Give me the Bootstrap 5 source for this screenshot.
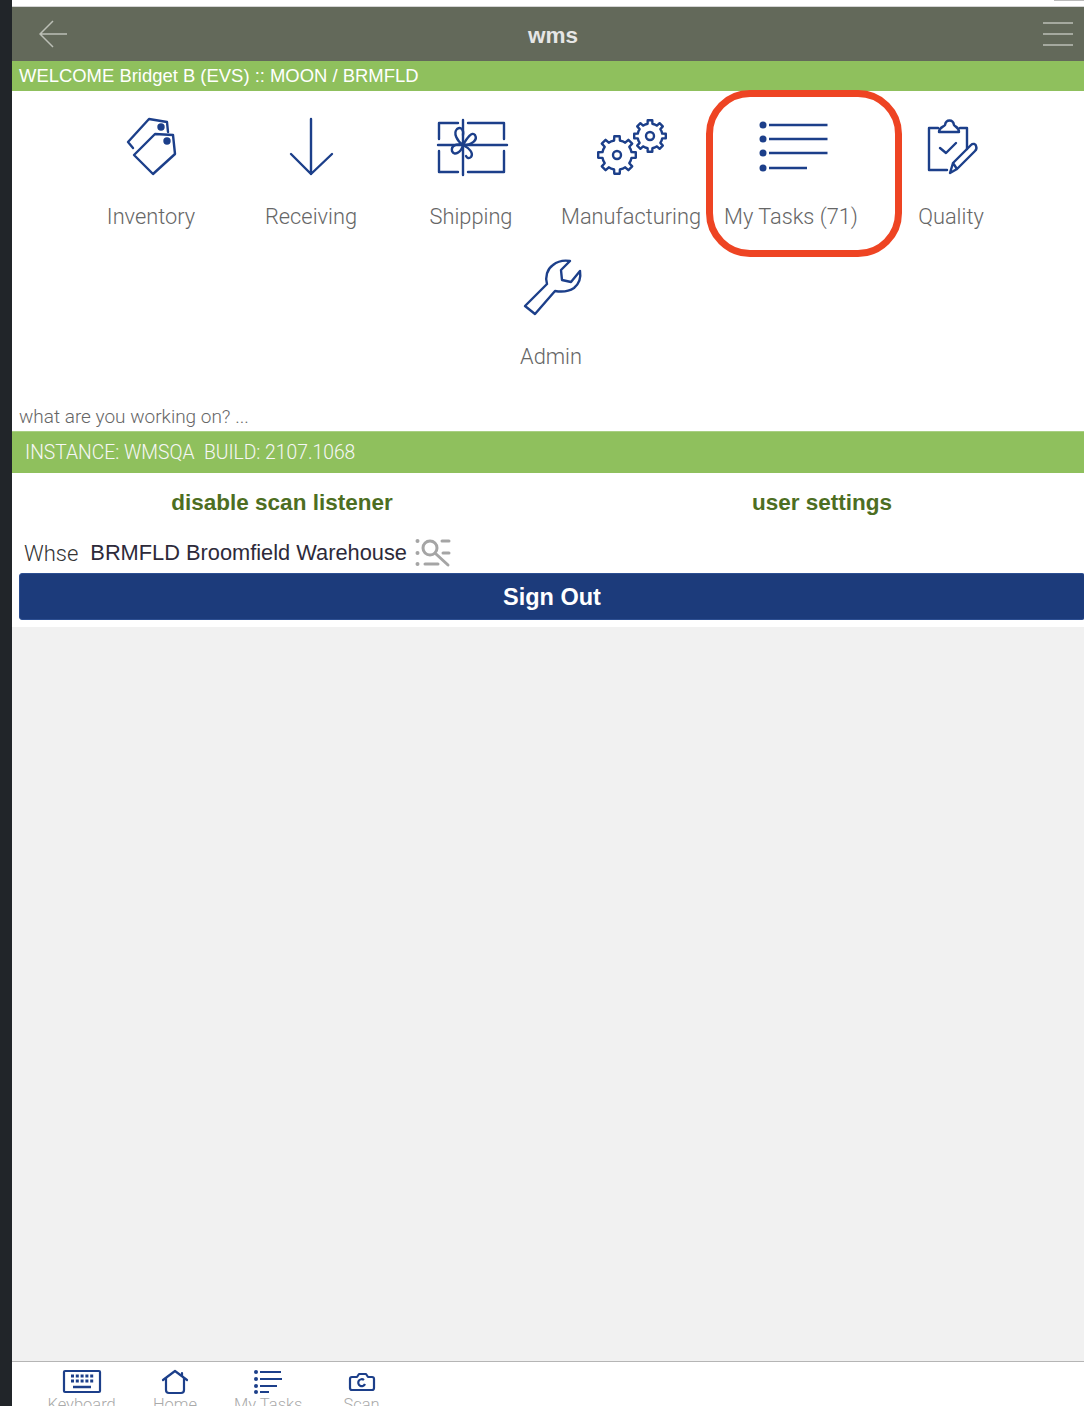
<!DOCTYPE html>
<html lang="en">
<head>
  <meta charset="UTF-8" />
  <meta name="viewport" content="width=device-width, initial-scale=1" />
  <title>wms</title>
  <link href="https://cdn.jsdelivr.net/npm/bootstrap@5.3.3/dist/css/bootstrap.min.css" rel="stylesheet" />
  <style>
    html, body { height: 1406px; overflow: hidden; }
    body { font-family: "Liberation Sans", Arial, sans-serif; background: #fff; }
    .side-strip { width: 12px; background: #212529; flex: none; }
    .app-page { width: 1080px; height: 1406px; flex: none; }
    .top-gap { height: 7px; border-bottom: 1px solid #d5d5d5; flex: none; }
    .top-sliver { position: absolute; left: 1054px; top: 0; width: 30px; height: 1px; background: #bbb; }
    .app-head { height: 54px; background: #63695a; padding: 0 19px 0 27px; flex: none; }
    .app-head b { font-size: 22.500px; color: #e6e6e6; margin-top: 3px; margin-left: -4px; }
    .welcome-bar { height: 30px; background: #8fc05d; color: #fff; font-size: 18.450px; line-height: 29px; padding-left: 7px; flex: none; }
    .tile-wrap { padding: 25px 2px 0 0; flex: none; }
    .app-tile { width: 160px; height: 140px; position: relative; text-align: center; }
    .app-tile svg { display: block; margin: 1px auto 0; overflow: visible; }
    .tile-name { margin-top: 25px; font-family: Roboto, "Liberation Sans", sans-serif; font-weight: 300; font-size: 21.800px; line-height: 30px; color: #666; white-space: nowrap; }
    .red-ring { position: absolute; left: -5px; top: -26px; width: 196px; height: 167px; border: 7px solid #ee4423; border-radius: 44px; }
    .work-on { font-family: Roboto, "Liberation Sans", sans-serif; font-weight: 300; font-size: 19px; line-height: 24px; color: #666; padding: 9px 0 2px 7px; flex: none; }
    .build-bar { height: 42px; background: #8fc05d; border-top: 1px solid #a9cf82; color: #f7f7f7; font-family: Roboto, "Liberation Sans", sans-serif; font-weight: 300; font-size: 19.300px; line-height: 41px; padding-left: 13px; white-space: pre; flex: none; }
    .link-row { height: 60px; flex: none; }
    .link-row a { color: #4d6e22; font-weight: 700; font-size: 22.500px; text-decoration: none; line-height: 60px; }
    .whse-row { height: 40px; padding: 0 0 0 12px; font-size: 21.800px; color: #2d2a3a; flex: none; }
    .whse-row span:first-child { font-family: Roboto, "Liberation Sans", sans-serif; font-weight: 300; font-size: 22px; color: #333; margin-right: 12px; }
    .whse-row svg { margin-left: 8px; }
    .sign-btn { display: block; width: 1066px; height: 47px; margin-left: 7px; padding: 3px 0 0; background: #1c3b7b; border: 1px solid #2d4f92; border-radius: 3px; color: #fff; font-size: 23.500px; font-weight: 700; flex: none; }
    .sign-btn:hover { background: #1c3b7b; color: #fff; }
    .gray-fill { margin-top: 7px; background: #f1f1f1; }
    .tab-bar { height: 45px; border-top: 1px solid #b5b5b5; background: #fff; padding-left: 23px; overflow: hidden; flex: none; }
    .tab-item { width: 93.300px; text-align: center; flex: none; }
    .tab-item svg { display: block; margin: 8px auto 0; overflow: visible; }
    .tab-item div { font-family: Roboto, "Liberation Sans", sans-serif; font-weight: 300; font-size: 16.500px; line-height: 16px; color: #aaa; white-space: nowrap; margin-top: 3px; }
  </style>
</head>
<body class="d-flex position-relative">
  <div class="side-strip"></div>
  <div class="top-sliver"></div>
  <div class="app-page d-flex flex-column">
    <div class="top-gap"></div>

    <div class="app-head d-flex align-items-center justify-content-between">
      <svg width="28" height="28" viewBox="0 0 28 28" fill="none" stroke="#bcbfb6" stroke-width="1.500"><path d="M14 1 1 14l13 13M1 14h27" /></svg>
      <b>wms</b>
      <svg width="30" height="26" viewBox="0 0 30 26" fill="none" stroke="#bcbfb6" stroke-width="1.500"><path d="M0 2h30M0 13h30M0 24h30" /></svg>
    </div>
    <div class="welcome-bar">WELCOME Bridget B (EVS) :: MOON / BRMFLD</div>

    <div class="tile-wrap d-flex flex-wrap justify-content-center">
      <div class="app-tile">
        <svg width="70" height="60" viewBox="0 0 70 60" fill="none" stroke="#1c3f8a" stroke-width="2.400" stroke-linejoin="round" stroke-linecap="round">
          <path d="M17 31 12 25 33 2l18 3 1 10" />
          <path d="M18 38 37 57 59 37 57 18 39 17Z" />
          <circle cx="45" cy="10" r="2.500" fill="#1c3f8a" /><circle cx="51" cy="24" r="2.500" fill="#1c3f8a" />
        </svg>
        <div class="tile-name">Inventory</div>
      </div>
      <div class="app-tile">
        <svg width="70" height="60" viewBox="0 0 70 60" fill="none" stroke="#1c3f8a" stroke-width="2.400" stroke-linejoin="round" stroke-linecap="round">
          <path d="M35 2V57M15 37 35 57 56 37" />
        </svg>
        <div class="tile-name">Receiving</div>
      </div>
      <div class="app-tile">
        <svg width="70" height="60" viewBox="0 0 70 60" fill="none" stroke="#1c3f8a" stroke-width="2.400" stroke-linejoin="round" stroke-linecap="round">
          <path d="M22 6H3V22M3 34V55H22M32 6H68V22M68 34V55H32M27 3V58M2 28H71" />
          <path d="M27 28C21 24 17 16 21 12 25 9 28 13 27 18M27 28C31 21 36 14 39 18 42 23 36 28 27 28M27 28C20 26 15 29 16 34 18 39 25 36 27 28M27 28C33 31 38 36 35 40 33 42 31 41 30 39" />
        </svg>
        <div class="tile-name">Shipping</div>
      </div>
      <div class="app-tile">
        <svg width="70" height="60" viewBox="0 0 70 60" fill="none" stroke="#1c3f8a" stroke-width="2.400" stroke-linejoin="round">
          <path data-gear="21,38,19" />
          <circle cx="21" cy="38" r="4" />
          <path data-gear="54,19,16" />
          <circle cx="54" cy="19" r="4" />
        </svg>
        <div class="tile-name">Manufacturing</div>
      </div>
      <div class="app-tile">
        <svg width="70" height="60" viewBox="0 0 70 60" fill="#1c3f8a" stroke="#1c3f8a" stroke-width="2.400">
          <circle cx="7" cy="8" r="3.500" stroke="none" /><circle cx="7" cy="22" r="3.500" stroke="none" />
          <circle cx="7" cy="36" r="3.500" stroke="none" /><circle cx="7" cy="51" r="3.500" stroke="none" />
          <path d="M13 8H71.500M13 22H71.500M13 36H71.500M13 51H51" />
        </svg>
        <div class="tile-name">My Tasks (71)</div>
        <div class="red-ring"></div>
      </div>
      <div class="app-tile">
        <svg width="70" height="60" viewBox="0 0 70 60" fill="none" stroke="#1c3f8a" stroke-width="2.400" stroke-linejoin="round" stroke-linecap="round">
          <path d="M22 11H13V53H31M44 11H51V32" />
          <path d="M23 15C23 10 28 10 29 8 30 2 37 2 38 8 39 10 43 10 43 15Z" />
          <path d="M24 31 30 36 40 26" />
          <path d="M34 56 37 46 55 28C57 26 60 27 60 29 61 31 60 33 59 34L41 52ZM37 46 41 52" />
        </svg>
        <div class="tile-name">Quality</div>
      </div>
      <div class="app-tile">
        <svg width="70" height="60" viewBox="0 0 70 60" fill="none" stroke="#1c3f8a" stroke-width="2.400" stroke-linejoin="round" stroke-linecap="round">
          <path d="M9 49 31 27C29 20 31 12 37 8 42 4 48 3 54 4L45 13 46 23 55 25 64 14C65 20 64 26 58 31 52 35 45 35 39 34L19 57Z" />
        </svg>
        <div class="tile-name">Admin</div>
      </div>
    </div>

    <div class="work-on">what are you working on? ...</div>
    <div class="build-bar">INSTANCE: WMSQA  BUILD: 2107.1068</div>

    <div class="row g-0 link-row text-center">
      <div class="col-6"><a href="#">disable scan listener</a></div>
      <div class="col-6"><a href="#">user settings</a></div>
    </div>

    <div class="whse-row d-flex align-items-center">
      <span>Whse</span>
      <span>BRMFLD Broomfield Warehouse</span>
      <svg width="36" height="30" viewBox="0 0 36 30" fill="none" stroke="#a5a5a5" stroke-width="3" stroke-linecap="round">
        <circle cx="2.500" cy="3" r="2" fill="#a5a5a5" stroke="none" /><circle cx="2.500" cy="15" r="2" fill="#a5a5a5" stroke="none" /><circle cx="2.500" cy="26" r="2" fill="#a5a5a5" stroke="none" />
        <circle cx="15" cy="10" r="7" />
        <path d="M21 16 33 27M27 3H34M28 15H34M10 26H23" />
      </svg>
    </div>
    <button type="button" class="btn sign-btn">Sign Out</button>

    <div class="gray-fill flex-grow-1"></div>

    <div class="tab-bar d-flex">
      <div class="tab-item">
        <svg width="38" height="24" viewBox="0 0 38 24" fill="none" stroke="#1c3f8a" stroke-width="2.200">
          <rect x="1" y="1" width="36" height="21" rx="1" />
          <path d="M8 6h23M8 11h23" stroke-dasharray="3 1.800" stroke-width="3" />
          <path d="M10 17h18" stroke-width="2.500" />
        </svg>
        <div>Keyboard</div>
      </div>
      <div class="tab-item">
        <svg width="26" height="24" viewBox="0 0 26 24" fill="none" stroke="#1c3f8a" stroke-width="2.200" stroke-linejoin="round" stroke-linecap="round">
          <path d="M1 10 13 1l12 9" />
          <path d="M4 8V20Q4 23 7 23H19Q22 23 22 20V8M20 6V3" />
        </svg>
        <div>Home</div>
      </div>
      <div class="tab-item">
        <svg width="28" height="24" viewBox="0 0 28 24" fill="#1c3f8a" stroke="#1c3f8a" stroke-width="1.800">
          <circle cx="2" cy="2" r="2" stroke="none" /><circle cx="2" cy="9" r="2" stroke="none" /><circle cx="2" cy="16" r="2" stroke="none" /><circle cx="2" cy="22" r="2" stroke="none" />
          <path d="M6 2H27M6 9H28M6 16H23M6 22H15" />
        </svg>
        <div>My Tasks</div>
      </div>
      <div class="tab-item">
        <svg width="26" height="24" viewBox="0 0 26 24" fill="none" stroke="#1c3f8a" stroke-width="2.200" stroke-linejoin="round">
          <path d="M3 7H8L10 4H17L19 7H23Q25 7 25 9V18Q25 20 23 20H3Q1 20 1 18V9Q1 7 3 7Z" />
          <path d="M15 10A3.500 3.500 0 1 0 16 14" />
        </svg>
        <div>Scan</div>
      </div>
    </div>
  </div>

  <script>
    // cog outline for the two Manufacturing gears
    document.querySelectorAll('[data-gear]').forEach(function (el) {
      const parts = el.dataset.gear.split(',').map(Number);
      const cx = parts[0], cy = parts[1], r = parts[2];
      const teeth = 8;
      let d = '';
      for (let i = 0; i < teeth; i++) {
        const a = (i / teeth) * Math.PI * 2;
        const step = (Math.PI * 2) / teeth;
        const pts = [[r * 0.78, a - step * 0.5], [r * 0.78, a - step * 0.25], [r, a - step * 0.18], [r, a + step * 0.18], [r * 0.78, a + step * 0.25]];
        pts.forEach(function (p, k) {
          const x = (cx + p[0] * Math.cos(p[1])).toFixed(1);
          const y = (cy + p[0] * Math.sin(p[1])).toFixed(1);
          d += (i === 0 && k === 0 ? 'M' : 'L') + x + ' ' + y;
        });
      }
      el.setAttribute('d', d + 'Z');
    });
  </script>
  <script src="https://cdn.jsdelivr.net/npm/bootstrap@5.3.3/dist/js/bootstrap.bundle.min.js"></script>
</body>
</html>
